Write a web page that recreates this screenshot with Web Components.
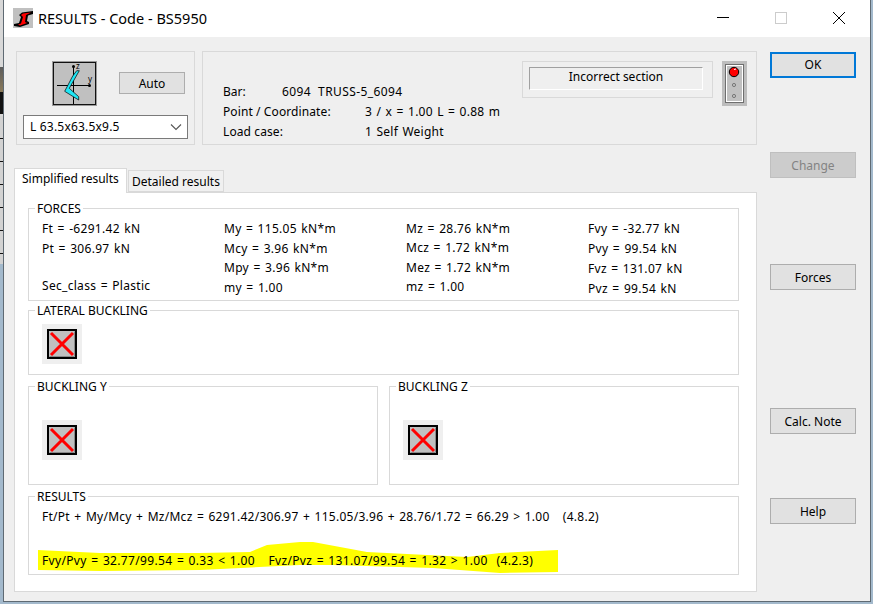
<!DOCTYPE html>
<html>
<head>
<meta charset="utf-8">
<title>RESULTS - Code - BS5950</title>
<style>
  html, body { margin: 0; padding: 0; height: 100%; overflow: hidden; background: #a3b9cc; }
</style>
</head>
<body>
<res-desktop>
  <res-window caption="RESULTS - Code - BS5950">
    <res-top-bar>
      <res-section-picker slot="picker" value="L 63.5x63.5x9.5"></res-section-picker>
      <res-bar-info slot="info"></res-bar-info>
      <res-status slot="status">Incorrect section</res-status>
    </res-top-bar>
    <res-tabs first="Simplified results" second="Detailed results">
      <res-group legend="FORCES" style="height:93px;margin-bottom:9px">
        <res-forces></res-forces>
      </res-group>
      <res-group legend="LATERAL BUCKLING" style="height:65px;margin-bottom:11px">
        <res-cross></res-cross>
      </res-group>
      <res-pair style="margin-bottom:11px">
        <res-group legend="BUCKLING Y" style="height:99px"><res-cross low></res-cross></res-group>
        <res-group legend="BUCKLING Z" style="height:99px"><res-cross low></res-cross></res-group>
      </res-pair>
      <res-group legend="RESULTS" style="height:79px">
        <res-summary></res-summary>
      </res-group>
    </res-tabs>
    <res-button slot="side" kind="default" style="margin-top:1px">OK</res-button>
    <res-button slot="side" kind="disabled" style="margin-top:74px">Change</res-button>
    <res-button slot="side" style="margin-top:86px">Forces</res-button>
    <res-button slot="side" style="margin-top:118px">Calc. Note</res-button>
    <res-button slot="side" style="margin-top:64px">Help</res-button>
  </res-window>
</res-desktop>

<script>
const FONT = `"Noto Sans", "Open Sans", sans-serif`;

let shadow = (el, html) => {
  el.attachShadow({ mode: "open" });
  el.shadowRoot.innerHTML = html;
};

/* DESKTOP behind the dialog */
class ResDesktop extends HTMLElement {
  connectedCallback() {
    shadow(this, `
      <style>
        :host { display: flex; width: 873px; height: 604px; font: 12px/16px ${FONT}; color: #000; }
        .strip { width: 3px; height: 264px; flex: none;
          background:
            repeating-linear-gradient(#d2d2d2 0 22px, #111 22px 23px) 0 116px / 3px 148px no-repeat,
            linear-gradient(#111, #111) 0 92px / 3px 22px no-repeat,
            linear-gradient(#5c5c5c, #8a7a5a) 0 67px / 3px 25px no-repeat,
            #d8d8d8; }
      </style>
      <div class="strip"></div>
      <slot></slot>`);
  }
}
customElements.define("res-desktop", ResDesktop);

/* WINDOW: title bar, client area with main column and button column */
class ResWindow extends HTMLElement {
  connectedCallback() {
    shadow(this, `
      <style>
        :host { display: flex; flex-direction: column; box-sizing: border-box; width: 868px; height: 602px;
          border: 1px solid #5f6a73; border-width: 0 1px 1px 1px; background: #efefef; }
        header { display: flex; align-items: center; height: 37px; background: #fff; flex: none; }
        .logo { margin-left: 9px; width: 20px; height: 20px; margin-top: -1px; }
        .caption { margin-left: 5px; font-size: 14.5px; margin-top: -1px; }
        .ctl { margin-left: auto; display: flex; }
        .ctl svg { width: 59px; height: 37px; display: block; }
        main { display: grid; grid-template-columns: 743px 86px; column-gap: 13px; padding: 14px 0 0 10px; }
        .left { display: flex; flex-direction: column; }
        .side { display: flex; flex-direction: column; }
      </style>
      <header>
        <svg class="logo" viewBox="0 0 20 20">
          <rect width="20" height="20" fill="#c0c0c0"/>
          <path d="M1 16 6 15 8 9 6 7 9 4.5 20 3 20 6 15 7.5 14 13 16 14 16 16 7 19 1 18Z" fill="#000"/>
          <path d="M5 16.5 8 15.5 10 9 8 7 10 5.5 18 4.5 13 7 12 14 14 15 7 17.5Z" fill="#f00"/>
        </svg>
        <span class="caption"></span>
        <div class="ctl">
          <svg viewBox="0 0 59 37"><path d="M24 17.5H36" stroke="#000" stroke-width="1"/></svg>
          <svg viewBox="0 0 59 37"><rect x="23.5" y="12.5" width="11" height="11" fill="none" stroke="#ccc"/></svg>
          <svg viewBox="0 0 59 37"><path d="M22 12 34 24M34 12 22 24" stroke="#000" fill="none"/></svg>
        </div>
      </header>
      <main>
        <div class="left"><slot></slot></div>
        <div class="side"><slot name="side"></slot></div>
      </main>`);
    this.shadowRoot.querySelector(".caption").textContent = this.getAttribute("caption");
  }
}
customElements.define("res-window", ResWindow);

/* TOP BAR: the two plain frames above the tabs */
class ResTopBar extends HTMLElement {
  connectedCallback() {
    shadow(this, `
      <style>
        :host { display: flex; gap: 7px; height: 94px; margin: 0 0 23px 2px; }
        .frame { box-sizing: border-box; height: 94px; border: 1px solid #d9d9d9; }
        .a { width: 179px; }
        .b { width: 555px; display: flex; }
        .r { margin-left: auto; }
      </style>
      <div class="frame a"><slot name="picker"></slot></div>
      <div class="frame b"><slot name="info"></slot><div class="r"><slot name="status"></slot></div></div>`);
  }
}
customElements.define("res-top-bar", ResTopBar);

class ResSectionPicker extends HTMLElement {
  connectedCallback() {
    shadow(this, `
      <style>
        :host { display: block; padding: 9px 6px 0; }
        .row { display: flex; align-items: flex-start; padding-left: 29px; }
        svg.ic { width: 45px; height: 45px; display: block; }
        svg text { font: 8px ${FONT}; }
        res-button { width: 66px; height: 22px; margin: 11px 0 0 22px; }
        .sel { box-sizing: border-box; display: flex; align-items: center; justify-content: space-between;
          width: 165px; height: 24px; margin-top: 9px; padding: 0 5px 0 6px; background: #fff; border: 1px solid #7a7a7a; }
        .sel span { letter-spacing: .2px; }
        .sel svg { width: 12px; height: 8px; }
      </style>
      <div class="row">
        <svg class="ic" viewBox="0 0 45 45">
          <rect x="0.5" y="0.5" width="44" height="44" fill="#c0c0c0" stroke="#9a9a9a"/>
          <rect x="1.5" y="1.5" width="42" height="42" fill="#c0c0c0" stroke="#111"/>
          <path d="M5 24.5H38M21.5 5V43" stroke="#000" fill="none"/>
          <circle cx="21.5" cy="5.5" r="1.5"/><circle cx="37.5" cy="24.5" r="1.5"/>
          <path d="M24.7 9.7 27.3 9.7 17.3 27.3 26.7 35.7 26.7 39 21.3 35.7 12.7 30.3 20.7 15Z" fill="#1ee6f5" stroke="#000" stroke-width=".7"/>
          <text x="24" y="8">z</text><text x="36" y="21">y</text>
        </svg>
        <res-button>Auto</res-button>
      </div>
      <div class="sel"><span></span>
        <svg viewBox="0 0 12 8"><path d="M1 1.5 6 6.5 11 1.5" fill="none" stroke="#555" stroke-width="1.1"/></svg>
      </div>`);
    this.shadowRoot.querySelector(".sel span").textContent = this.getAttribute("value");
  }
}
customElements.define("res-section-picker", ResSectionPicker);

class ResBarInfo extends HTMLElement {
  connectedCallback() {
    shadow(this, `
      <style>
        :host { display: grid; grid-template-columns: 59px 83px auto; grid-auto-rows: 20px; align-items: center;
          align-content: start; padding: 30px 0 0 20px; }
        .w { grid-column: 1 / span 2; letter-spacing: .1px; }
        .v { grid-column: 2 / span 2; letter-spacing: .4px; }
        .n { letter-spacing: .25px; word-spacing: 1px; }
      </style>
      <span>Bar:</span><span class="v">6094&nbsp; TRUSS-5_6094</span>
      <span class="w">Point / Coordinate:</span><span class="n">3 / x = 1.00 L = 0.88 m</span>
      <span class="w">Load case:</span><span class="n">1 Self Weight</span>`);
  }
}
customElements.define("res-bar-info", ResBarInfo);

/* Status text and the small traffic light */
class ResStatus extends HTMLElement {
  connectedCallback() {
    shadow(this, `
      <style>
        :host { display: flex; align-items: flex-start; gap: 9px; padding: 9px 9px 0 0; }
        .box { box-sizing: border-box; width: 191px; height: 37px; border: 1px solid #d9d9d9; padding: 5px 9px 7px 6px; }
        .in { box-sizing: border-box; height: 23px; text-align: center; line-height: 17px;
          border: 1px solid; border-color: #a0a0a0 #fff #fff #a0a0a0; }
        svg { width: 25px; height: 45px; display: block; }
      </style>
      <div class="box"><div class="in"><slot></slot></div></div>
      <svg viewBox="0 0 25 45">
        <rect width="25" height="45" fill="#bdbdbd"/>
        <rect x="3.5" y="3.5" width="18" height="38" fill="#c0c0c0" stroke="#6e6e6e"/>
        <rect x="4.5" y="4.5" width="16" height="36" fill="#c0c0c0" stroke="#fff"/>
        <circle cx="12" cy="11" r="4.7" fill="#f00" stroke="#000"/>
        <path d="M12 8.5 14 8" stroke="#fff"/>
        <circle cx="12" cy="24" r="1.6" fill="none" stroke="#777"/>
        <circle cx="12" cy="35" r="1.6" fill="none" stroke="#777"/>
      </svg>`);
  }
}
customElements.define("res-status", ResStatus);

class ResButton extends HTMLElement {
  connectedCallback() {
    let kind = this.getAttribute("kind");
    shadow(this, `
      <style>
        :host { display: block; height: 26px; flex: none; }
        div { box-sizing: border-box; height: 100%; display: flex; align-items: center; justify-content: center;
          background: #e1e1e1; border: 1px solid #adadad; padding-top: 1px; }
        .default { border: 2px solid #0078d7; padding-top: 0; }
        .disabled { background: #ccc; border-color: #bfbfbf; color: #838383; }
      </style>
      <div class="${kind || ""}"><slot></slot></div>`);
  }
}
customElements.define("res-button", ResButton);

/* TABS */
class ResTabs extends HTMLElement {
  connectedCallback() {
    shadow(this, `
      <style>
        :host { display: block; width: 743px; }
        .heads { display: flex; align-items: flex-end; height: 24px; position: relative; z-index: 1; }
        .t { box-sizing: border-box; border: 1px solid #d9d9d9; }
        .on { width: 113px; height: 25px; margin-bottom: -1px; padding: 2px 0 0 7px; background: #fff; border-bottom: 0; }
        .off { width: 96px; height: 22px; margin-left: 1px; padding: 3px 0 0 3px; background: #f0f0f0; }
        .pane { box-sizing: border-box; height: 400px; background: #fff; border: 1px solid #d9d9d9;
          padding: 15px 17px 0 13px; display: flex; flex-direction: column; }
      </style>
      <div class="heads"><div class="t on"></div><div class="t off"></div></div>
      <div class="pane"><slot></slot></div>`);
    this.shadowRoot.querySelector(".on").textContent = this.getAttribute("first");
    this.shadowRoot.querySelector(".off").textContent = this.getAttribute("second");
  }
}
customElements.define("res-tabs", ResTabs);

/* Frame with its label sitting on the top border */
class ResGroup extends HTMLElement {
  connectedCallback() {
    shadow(this, `
      <style>
        :host { display: block; box-sizing: border-box; position: relative; border: 1px solid #d9d9d9; background: #fff; flex: none; }
        .lg { position: absolute; left: 6px; top: -8px; padding: 0 2px; background: #fff; line-height: 15px; z-index: 1; }
      </style>
      <span class="lg"></span><slot></slot>`);
    this.shadowRoot.querySelector(".lg").textContent = this.getAttribute("legend");
  }
}
customElements.define("res-group", ResGroup);

class ResPair extends HTMLElement {
  connectedCallback() {
    shadow(this, `
      <style>
        :host { display: grid; grid-template-columns: 350px 350px; column-gap: 11px; flex: none; }
      </style>
      <slot></slot>`);
  }
}
customElements.define("res-pair", ResPair);

/* FORCES table, the columns do not line up exactly in the original dialog */
class ResForces extends HTMLElement {
  connectedCallback() {
    const cols = [
      [["Ft = -6291.42 kN", 0], ["Pt = 306.97 kN", 20], ["Sec_class = Plastic", 57]],
      [["My = 115.05 kN*m", 0], ["Mcy = 3.96 kN*m", 20], ["Mpy = 3.96 kN*m", 39], ["my = 1.00", 59]],
      [["Mz = 28.76 kN*m", 0], ["Mcz = 1.72 kN*m", 19], ["Mez = 1.72 kN*m", 39], ["mz = 1.00", 58]],
      [["Fvy = -32.77 kN", 0], ["Pvy = 99.54 kN", 20], ["Fvz = 131.07 kN", 40], ["Pvz = 99.54 kN", 60]]
    ];
    shadow(this, `
      <style>
        :host { display: grid; grid-template-columns: repeat(4, 182px); padding: 12px 0 0 13px;
          letter-spacing: .3px; word-spacing: 1px; }
        .c span { display: block; height: 16px; white-space: nowrap; }
      </style>
      ${cols.map((c) => {
        let prev = 0;
        return `<div class="c">` + c.map(([t, y], i) => {
          let gap = i === 0 ? 0 : y - prev - 16;
          prev = y;
          return `<span style="margin-top:${gap}px">${t}</span>`;
        }).join("") + `</div>`;
      }).join("")}`);
  }
}
customElements.define("res-forces", ResForces);

/* Red cross button */
class ResCross extends HTMLElement {
  connectedCallback() {
    shadow(this, `
      <style>
        :host { display: block; width: 40px; height: 40px; margin: 13px 0 0 13px; background: #efefef; }
        :host([low]) { margin-top: 33px; }
        svg { display: block; width: 30px; height: 30px; padding: 5px; }
      </style>
      <svg viewBox="0 0 30 30">
        <rect x="1" y="1" width="28" height="28" fill="#c0c0c0" stroke="#000" stroke-width="2"/>
        <path d="M2.5 27.5H27.5V2.5" fill="none" stroke="#8a8a8a"/>
        <path d="M4 4 26 26M26 4 4 26" stroke="#f00" stroke-width="3" fill="none"/>
      </svg>`);
  }
}
customElements.define("res-cross", ResCross);

/* RESULTS text with the yellow marker stroke under the second line */
class ResSummary extends HTMLElement {
  connectedCallback() {
    shadow(this, `
      <style>
        :host { display: block; position: relative; height: 77px; padding-left: 13px; word-spacing: 1px; }
        svg { position: absolute; left: -29px; top: -497px; width: 600px; height: 600px; pointer-events: none; }
        p { position: relative; margin: 0; white-space: pre; }
        .a { padding-top: 12px; letter-spacing: .27px; }
        .b { padding-top: 28px; letter-spacing: .34px; }
      </style>
      <svg viewBox="0 0 600 600">
        <path d="M38 550 100 553 200 553 250 552 267 545 300 542 313 542 367 552 467 557 500 553 558 550 558 572 500 573 433 568 333 565 300 565 200 570 100 571 38 570Z" fill="#ffff00"/>
      </svg>
      <p class="a">Ft/Pt + My/Mcy + Mz/Mcz = 6291.42/306.97 + 115.05/3.96 + 28.76/1.72 = 66.29 &gt; 1.00   (4.8.2)</p>
      <p class="b">Fvy/Pvy = 32.77/99.54 = 0.33 &lt; 1.00   Fvz/Pvz = 131.07/99.54 = 1.32 &gt; 1.00  (4.2.3)</p>`);
  }
}
customElements.define("res-summary", ResSummary);
</script>
</body>
</html>
